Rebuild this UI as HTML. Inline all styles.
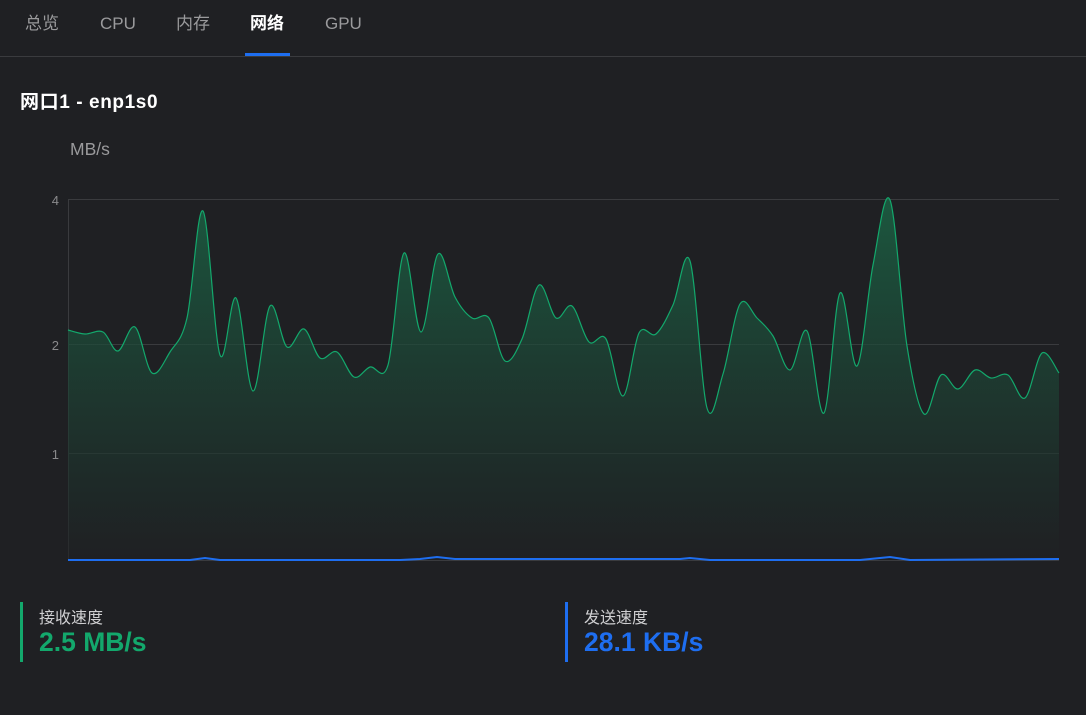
<!DOCTYPE html>
<html><head><meta charset="utf-8"><style>
body{margin:0;background:#1f2023;width:1086px;height:715px;overflow:hidden;font-family:"Liberation Sans","Noto Sans CJK SC",sans-serif;position:relative}
.tabs{position:absolute;top:0;left:0;width:1086px;height:56px;border-bottom:1px solid #3a3b3e}
.tab{position:absolute;top:0;height:48px;line-height:48px;font-size:17px;color:#9a9a9c}
.tab.on{color:#fff;font-weight:bold}
.ul{position:absolute;left:245px;top:53px;width:45px;height:3px;background:#1e6ef0}
.title{position:absolute;left:20px;top:87px;font-size:19px;letter-spacing:0.6px;font-weight:bold;color:#fff}
.unit{position:absolute;left:70px;top:139px;font-size:17.5px;color:#9a9a9c}
.stat{position:absolute;top:602px;height:60px;border-left:3px solid}
.stat .l{position:absolute;left:16px;top:2px;font-size:16px;color:#cfcfd1;white-space:nowrap}
.stat .v{position:absolute;left:16px;top:25px;font-size:26.5px;font-weight:bold;white-space:nowrap}
</style></head><body>
<div class="tabs">
<div class="tab" style="left:25px">总览</div>
<div class="tab" style="left:100px">CPU</div>
<div class="tab" style="left:176px">内存</div>
<div class="tab on" style="left:250px">网络</div>
<div class="tab" style="left:325px">GPU</div>
<div class="ul"></div>
</div>
<div class="title">网口1 - enp1s0</div>
<div class="unit">MB/s</div>
<svg width="1086" height="715" style="position:absolute;left:0;top:0">
<defs><linearGradient id="g" x1="0" y1="0" x2="0" y2="1"><stop offset="0" stop-color="#1a6a48" stop-opacity="0.75"/><stop offset="1" stop-color="#1f2023" stop-opacity="0.6"/></linearGradient></defs>
<g stroke="#3a3b3e" stroke-width="1">
<line x1="68" y1="199.5" x2="1059" y2="199.5"/><line x1="68" y1="344.5" x2="1059" y2="344.5"/><line x1="68" y1="453.5" x2="1059" y2="453.5"/>
<line x1="68.5" y1="199" x2="68.5" y2="560"/><line x1="68" y1="560.5" x2="1059" y2="560.5"/></g>
<g fill="#8a8a8c" font-size="13" font-family="Liberation Sans,sans-serif" text-anchor="end">
<text x="59" y="205">4</text><text x="59" y="350">2</text><text x="59" y="459">1</text></g>
<path id="fill" fill="url(#g)"/>
<path id="line" fill="none" stroke="#13a86c" stroke-width="1.2"/>
<path d="M68 560 L190 560 L205 558 L220 560 L400 560 L420 559 L437 557 L455 559 L680 559 L690 558 L710 560 L860 560 L890 557 L910 560 L1059 559" fill="none" stroke="#1e6ef0" stroke-width="2"/>
</svg>
<div class="stat" style="left:20px;border-color:#13a86c"><div class="l">接收速度</div><div class="v" style="color:#13a86c">2.5 MB/s</div></div>
<div class="stat" style="left:565px;border-color:#1e6ef0"><div class="l">发送速度</div><div class="v" style="color:#1e6ef0">28.1 KB/s</div></div>
<script>
var p=[[68,330],[85,334],[103,332],[118,351],[135,327],[152,373],[170,352],[187,318],[203,211],[220,355],[236,298],[253,391],[270,306],[287,347],[304,329],[320,358],[337,352],[354,377],[370,367],[388,365],[404,253],[421,332],[438,254],[455,297],[472,318],[489,318],[505,361],[522,339],[539,285],[556,318],[572,306],[589,342],[606,339],[623,396],[639,333],[656,334],[673,305],[690,261],[707,408],[723,374],[740,304],[757,318],[773,336],[790,370],[807,331],[824,413],[840,293],[857,366],[873,265],[890,200],[907,346],[924,414],[941,375],[958,389],[975,370],[991,378],[1008,375],[1025,398],[1042,353],[1059,373]];
var d="M"+p[0][0]+" "+p[0][1];
for(var i=0;i<p.length-1;i++){var a=p[i-1]||p[i],b=p[i],c=p[i+1],e=p[i+2]||c;
d+=" C"+(b[0]+(c[0]-a[0])/6)+" "+(b[1]+(c[1]-a[1])/6)+" "+(c[0]-(e[0]-b[0])/6)+" "+(c[1]-(e[1]-b[1])/6)+" "+c[0]+" "+c[1];}
document.getElementById("line").setAttribute("d",d);
document.getElementById("fill").setAttribute("d",d+" L1059 560 L68 560Z");
</script>
</body></html>
